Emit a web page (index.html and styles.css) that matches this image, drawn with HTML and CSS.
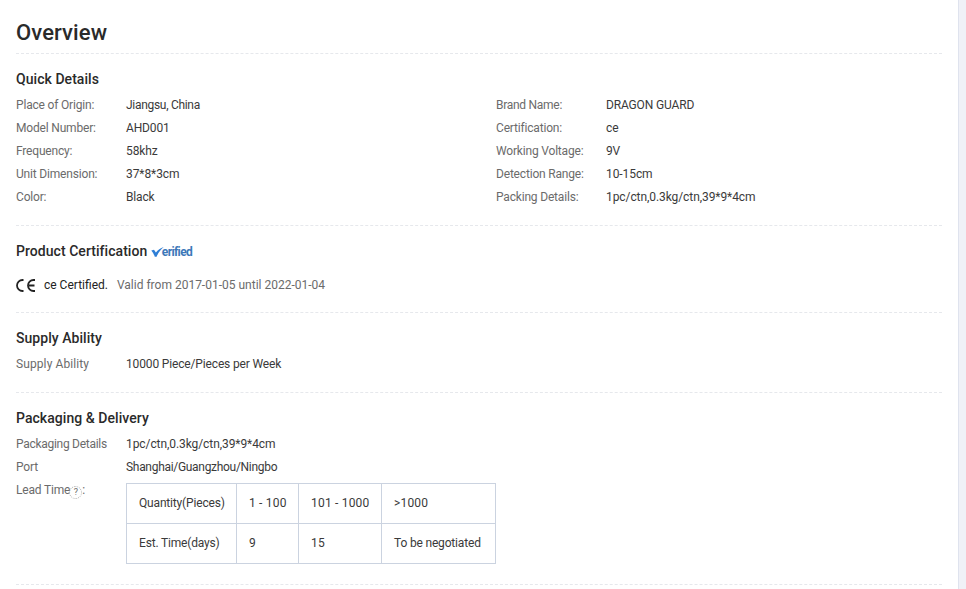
FILE: index.html
```html
<!DOCTYPE html>
<html lang="en">
<head>
<meta charset="utf-8">
<title>Overview</title>
<link rel="stylesheet" href="styles.css">
</head>
<body>
<main class="page">
  <header class="head"><h1 class="title">Overview</h1></header>

  <section class="sec sec-quick">
    <h2 class="sec-title">Quick Details</h2>
    <div class="quick">
      <div class="row"><span class="k">Place of Origin:</span><span class="v v-tight">Jiangsu, China</span></div>
      <div class="row"><span class="k k-tight">Brand Name:</span><span class="v">DRAGON GUARD</span></div>
      <div class="row"><span class="k">Model Number:</span><span class="v">AHD001</span></div>
      <div class="row"><span class="k">Certification:</span><span class="v">ce</span></div>
      <div class="row"><span class="k">Frequency:</span><span class="v v-wide">58khz</span></div>
      <div class="row"><span class="k">Working Voltage:</span><span class="v">9V</span></div>
      <div class="row"><span class="k">Unit Dimension:</span><span class="v v-wide">37*8*3cm</span></div>
      <div class="row"><span class="k">Detection Range:</span><span class="v v-wide">10-15cm</span></div>
      <div class="row"><span class="k">Color:</span><span class="v">Black</span></div>
      <div class="row"><span class="k">Packing Details:</span><span class="v v-wide">1pc/ctn,0.3kg/ctn,39*9*4cm</span></div>
    </div>
  </section>

  <section class="sec sec-cert">
    <h2 class="sec-title">Product Certification
      <span class="verified"><svg class="check" width="13" height="10" viewBox="0 0 13 10" aria-hidden="true"><path d="M0.3 3.6 L3 2.8 L4.9 5.6 C6.8 3 9.4 1 12.8 0 C9.8 2.4 7.2 5.6 5.6 9.8 L3.8 9.8 C3 7.4 1.8 5.4 0.3 3.6 Z"/></svg>erified</span>
    </h2>
    <div class="cert">
      <svg class="ce" width="20" height="13" viewBox="0 0 20 13" aria-hidden="true"><path d="M7.5 1 H6.5 A5.5 5.5 0 0 0 6.5 12 H7.5 M19 1 H17.5 A5.5 5.5 0 0 0 17.5 12 H19 M13 6.5 H18.5"/></svg>
      <span class="cert-name">ce Certified.</span>
      <span class="cert-valid">Valid from 2017-01-05 until 2022-01-04</span>
    </div>
  </section>

  <section class="sec sec-supply">
    <h2 class="sec-title">Supply Ability</h2>
    <div class="row"><span class="k k-wide">Supply Ability</span><span class="v">10000 Piece/Pieces per Week</span></div>
  </section>

  <section class="sec sec-pack">
    <h2 class="sec-title">Packaging &amp; Delivery</h2>
    <div class="row"><span class="k k-tight">Packaging Details</span><span class="v v-wide">1pc/ctn,0.3kg/ctn,39*9*4cm</span></div>
    <div class="row"><span class="k">Port</span><span class="v v-tight">Shanghai/Guangzhou/Ningbo</span></div>
    <div class="row row-lead">
      <span class="k">Lead Time<span class="help">?</span>:</span>
      <table class="lead">
        <tr><td class="c1">Quantity(Pieces)</td><td class="c2 num">1 - 100</td><td class="c3 num">101 - 1000</td><td class="c4 num">&gt;1000</td></tr>
        <tr><td>Est. Time(days)</td><td class="num">9</td><td class="num">15</td><td>To be negotiated</td></tr>
      </table>
    </div>
  </section>
</main>
</body>
</html>
```
FILE: styles.css
```css
* { box-sizing: border-box; }
html, body { margin: 0; height: 100%; }
body {
  height: 589px;
  overflow: hidden;
  background: #f0f1f7;
  font-family: Roboto, "Liberation Sans", sans-serif;
  font-size: 12px;
  color: #333;
}
.page {
  width: 959px;
  height: 589px;
  padding: 0 16px;
  background: #fff;
  border-right: 1px solid #dfe3ee;
  overflow: hidden;
}
.head {
  height: 54px;
  padding-top: 19px;
  border-bottom: 1px dashed #e6e8ec;
}
.title {
  margin: 0;
  font-size: 22px;
  line-height: 28px;
  font-weight: 500;
  letter-spacing: 0.1px;
  color: #2a2a2a;
}
.sec { border-bottom: 1px dashed #e6e8ec; }
.sec-quick { height: 172px; padding-top: 16px; }
.sec-cert { height: 87px; padding-top: 16px; }
.sec-supply { height: 80px; padding-top: 16px; }
.sec-pack { height: 192px; padding-top: 16px; }
.sec-title {
  margin: 0;
  height: 19px;
  font-size: 14px;
  line-height: 18px;
  font-weight: 500;
  letter-spacing: 0.05px;
  color: #2a2a2a;
}
.quick {
  display: grid;
  grid-template-columns: 480px 1fr;
  margin-top: 5px;
}
.row {
  display: flex;
  min-height: 23px;
  line-height: 23px;
}
.sec-supply .sec-title, .sec-pack .sec-title { margin-bottom: 5px; }
.k { width: 110px; flex: none; color: #6b6b6b; letter-spacing: -0.18px; }
.k-tight { letter-spacing: -0.28px; }
.k-wide { letter-spacing: 0.1px; }
.v { color: #3a3a3a; letter-spacing: -0.15px; }
.v-tight { letter-spacing: -0.3px; }
.v-wide { letter-spacing: -0.08px; }
.verified {
  margin-left: 0;
  font-size: 12px;
  font-weight: 700;
  letter-spacing: -0.65px;
  color: #3c78b9;
}
.check { fill: #2f7fd6; vertical-align: -1px; margin-right: -2px; }
.cert {
  display: flex;
  align-items: center;
  height: 20px;
  margin-top: 14px;
}
.ce {
  flex: none;
  fill: none;
  stroke: #222;
  stroke-width: 1.8;
  margin-right: 8px;
}
.cert-name { color: #222; margin-right: 10px; }
.cert-valid { color: #6b6b6b; margin-left: -1px; }
.help {
  display: inline-block;
  width: 13px;
  height: 13px;
  margin-left: -1px;
  border: 1px dotted #aaa;
  border-radius: 50%;
  font-size: 9px;
  line-height: 11px;
  text-align: center;
  vertical-align: -1px;
}
.row-lead { align-items: flex-start; }
.lead {
  border-collapse: collapse;
  table-layout: fixed;
  width: 370px;
  margin-top: 4px;
  color: #3a3a3a;
  letter-spacing: -0.17px;
}
.lead td {
  height: 40px;
  padding: 0 0 2px 12px;
  border: 1px solid #cbd3e0;
  line-height: 16px;
}
.lead .num { letter-spacing: 0.2px; }
.c1 { width: 110px; }
.c2 { width: 62px; }
.c3 { width: 83px; }
```
